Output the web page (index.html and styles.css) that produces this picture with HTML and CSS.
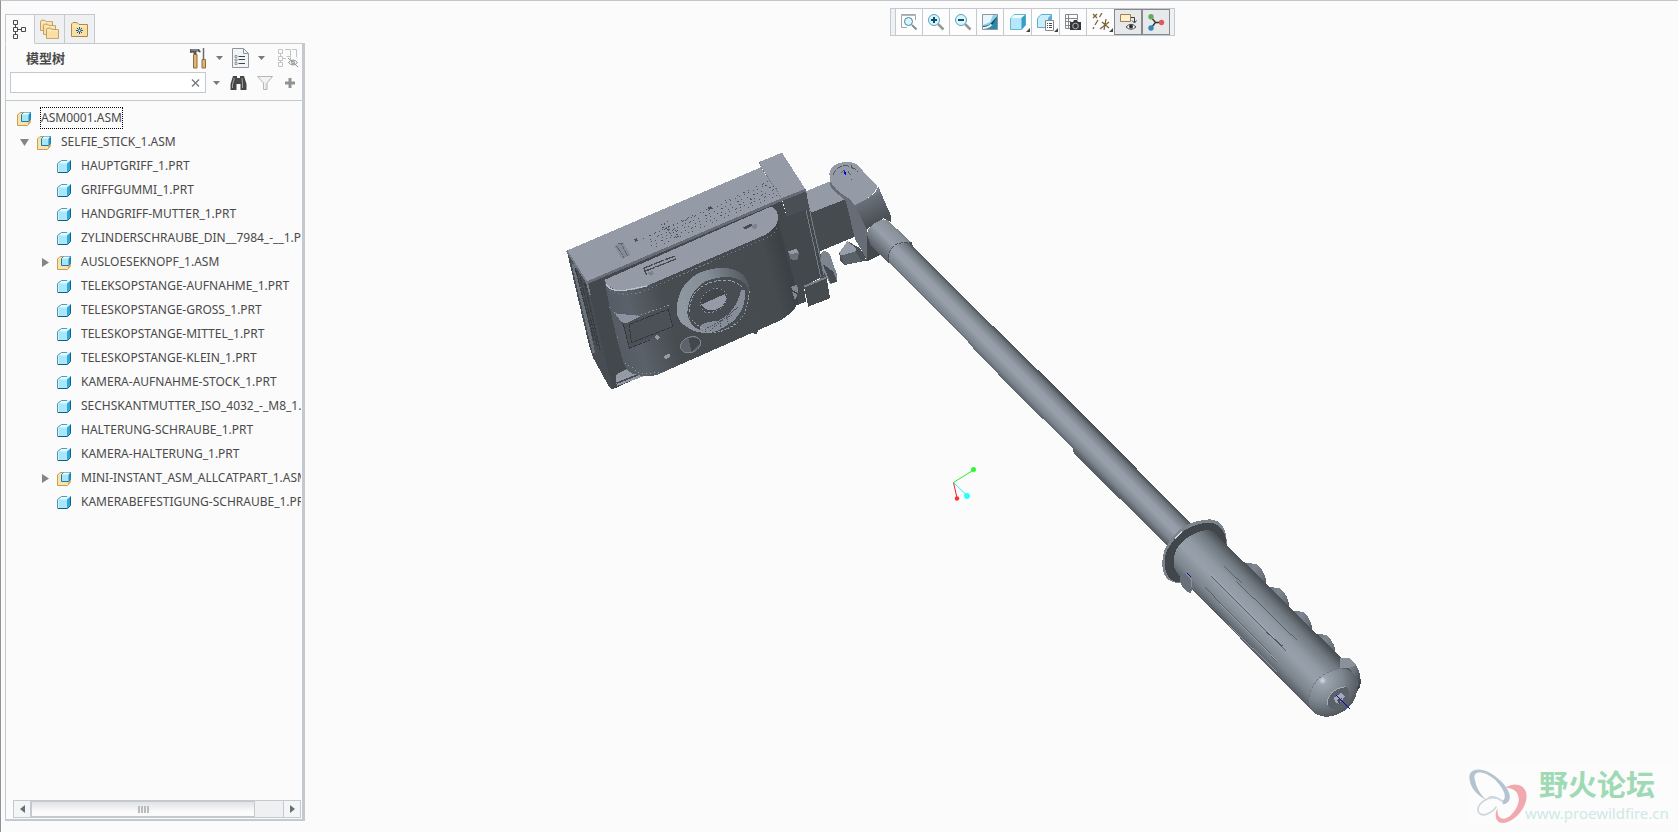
FILE: index.html
```html
<!DOCTYPE html>
<html lang="zh-CN">
<head>
<meta charset="utf-8">
<title>ASM0001.ASM</title>
<link rel="stylesheet" href="styles.css">
</head>
<body>
<svg class="defs" aria-hidden="true">
  <symbol id="part" viewBox="0 0 15 15">
    <path d="M1 4.500L4.500 1.500H13.500V10L10 13.500H1.500V4.500Z" fill="#a8e8fa"/>
    <path d="M1 4.500L4.500 1.500H13.500L10 4.500Z" fill="#e6faff"/>
    <path d="M10 4.500L13.500 1.500V10L10 13.500Z" fill="#2fa9dc"/>
    <path d="M.5 4.500L4.500 1.500H10M.5 4.500V13.500" fill="none" stroke="#4b9bbd"/>
    <path d="M1 13.500H10.500L13.500 10.500V1.500" fill="none" stroke="#15607f"/>
  </symbol>
  <symbol id="asm" viewBox="0 0 15 15">
    <path d="M.5 4L3 1.500H6V10H13V11.500L10.500 14.500H.5Z" fill="#fbe3b0" stroke="#c79f56"/>
    <path d="M11 14L14 11V9H11Z" fill="#d9b063"/>
    <path d="M4.500 3.500L6.500 1.500H13.500V8.500L11.500 10.500H4.500Z" fill="#a5e6fa" stroke="#1e7ba1"/>
    <path d="M11.500 3.500L13.500 1.500V8.500L11.500 10.500Z" fill="#2490bd"/>
    <path d="M5 3.500L7 1.500H13L11.500 3.500Z" fill="#e8fbff"/>
  </symbol>
  <symbol id="folder" viewBox="0 0 17 16">
    <path d="M.5 15V3L2 1.500H6L8 3.500H16.500V15.500H.5Z" fill="#f9dfa5" stroke="#b38a45"/>
    <path d="M1.500 5H15.500" stroke="#fff3d2"/>
  </symbol>
  <symbol id="caret" viewBox="0 0 7 4"><path d="M0 0H7L3.500 4Z" fill="#77797b"/></symbol>
</svg>

<aside class="side">
  <nav class="tabs" aria-label="导航器">
    <button class="tab tab-on" aria-label="模型树"><svg width="14" height="20" viewBox="0 0 14 20" fill="none" stroke="#4a4a4a"><path d="M.5 1.500H4.500V5.500H.5ZM.5 8.500H4.500V12.500H.5ZM.5 15.500H4.500V19.500H.5ZM8.500 8.500H12.500V12.500H8.500ZM2.500 5.500V8.500M2.500 12.500V15.500M4.500 10.500H8.500"/></svg></button>
    <button class="tab" aria-label="文件夹浏览器"><svg width="20" height="20" viewBox="0 0 20 20"><use href="#folder" width="13" height="12"/><use href="#folder" x="3" y="4" width="13" height="12"/><use href="#folder" x="6" y="8" width="13" height="12"/></svg></button>
    <button class="tab" aria-label="收藏夹"><svg width="17" height="16" viewBox="0 0 17 16"><use href="#folder" width="17" height="16"/><path d="M8.500 6V13M5 9.500H12M6 7L11 12M11 7L6 12" stroke="#0f5b80"/><path d="M7.500 8.500H9.500V10.500H7.500Z" fill="#d8f4ff"/></svg></button>
  </nav>

  <section class="panel">
    <header class="head">
      <h1 class="title">模型树</h1>
      <button class="tool" aria-label="设置"><svg width="17" height="21" viewBox="0 0 17 21"><path d="M0 1H9L11 4L9.500 4.500L8 3.500H6.500V6H3.500V4.500L0 5Z" fill="#555"/><path d="M1 2H8" stroke="#aaa"/><path d="M3.500 6.500H7V20H3.500Z" fill="#e0b674" stroke="#8d6c3c"/><path d="M13.500 0V11" stroke="#6b6b6b" stroke-width="1.500"/><path d="M12 11.500H15.500V20H12Z" fill="#e0b674" stroke="#8d6c3c"/></svg></button>
      <button class="tool" aria-label="设置菜单"><svg width="7" height="4"><use href="#caret"/></svg></button>
      <button class="tool" aria-label="显示"><svg width="17" height="20" viewBox="0 0 17 20" fill="none"><path d="M.5 .5H11.500L16.500 5.500V19.500H.5Z" fill="#f2f5f7" stroke="#8b969f"/><path d="M11.500 .5V5.500H16.500" stroke="#8b969f"/><path d="M6.500 8.500H13M6.500 11.500H13M6.500 15.500H13" stroke="#444"/><path d="M3 7.500H5V9.500H3ZM3 11H5V13H3ZM3 14.500H5V16.500H3Z" stroke="#777" stroke-width=".7"/></svg></button>
      <button class="tool" aria-label="显示菜单"><svg width="7" height="4"><use href="#caret"/></svg></button>
      <button class="tool columns" aria-label="隐藏列" disabled><svg width="21" height="20" viewBox="0 0 21 20" fill="none" stroke="#c2c4c6"><path d="M.5 1.500H4.500V5.500H.5ZM.5 8.500H4.500V12.500H.5ZM.5 14.500H4.500V18.500H.5ZM2.500 5.500V8.500M2.500 12.500V14.500M4.500 10.500H8M7 1.500H12.500V8M14 1.500H18.500V9M8.500 8.500H12.500V12.500"/><path d="M10.500 14.500Q15 9.500 19.500 14.500Q15 19.500 10.500 14.500ZM10 10L20 19" stroke="#929496"/><circle cx="15" cy="14.500" r="1.500" stroke="#929496"/></svg></button>
    </header>

    <div class="find">
      <div class="field">
        <input class="query" type="text" aria-label="搜索">
        <button class="clear" aria-label="清除"><svg width="9" height="8" viewBox="0 0 9 8"><path d="M1 .5L8 7.500M8 .5L1 7.500" stroke="#77797b" stroke-width="1.400"/></svg></button>
      </div>
      <button class="tool drop" aria-label="搜索选项"><svg width="7" height="4"><use href="#caret"/></svg></button>
      <button class="tool" aria-label="查找"><svg width="17" height="16" viewBox="0 0 17 16"><path d="M3 1H7V3H10V1H14L16.500 9V15H10.500V9H6.500V15H.5V9Z" fill="#444648"/><path d="M4 3V5L2.500 9V13M12 3L12.500 9V13" stroke="#a0a2a4" fill="none"/></svg></button>
      <button class="tool" aria-label="筛选"><svg width="17" height="16" viewBox="0 0 17 16"><path d="M.5 1.500H15.500L10 8V14.500H6.500V8Z" fill="#f3f3f3" stroke="#b4b6b8"/><path d="M9 8V14" stroke="#c8cacc"/></svg></button>
      <button class="tool" aria-label="添加"><svg width="12" height="12" viewBox="0 0 12 12"><path d="M6 1V11M1 6H11" stroke="#909294" stroke-width="3"/></svg></button>
    </div>

    <ul class="tree">
      <li class="row l0"><svg class="ic"><use href="#asm"/></svg><span class="name focus">ASM0001.ASM</span></li>
      <li class="row l1"><button class="twist" aria-label="折叠"><svg width="9" height="7"><path d="M0 0H9L4.500 7Z" fill="#858585"/></svg></button><svg class="ic"><use href="#asm"/></svg><span class="name">SELFIE_STICK_1.ASM</span></li>
      <li class="row l2"><svg class="ic"><use href="#part"/></svg><span class="name">HAUPTGRIFF_1.PRT</span></li>
      <li class="row l2"><svg class="ic"><use href="#part"/></svg><span class="name">GRIFFGUMMI_1.PRT</span></li>
      <li class="row l2"><svg class="ic"><use href="#part"/></svg><span class="name">HANDGRIFF-MUTTER_1.PRT</span></li>
      <li class="row l2"><svg class="ic"><use href="#part"/></svg><span class="name">ZYLINDERSCHRAUBE_DIN__7984_-__1.PRT</span></li>
      <li class="row l2 sub"><button class="twist" aria-label="展开"><svg width="9" height="9"><path d="M2 0L9 4.500L2 9Z" fill="#858585"/></svg></button><svg class="ic"><use href="#asm"/></svg><span class="name">AUSLOESEKNOPF_1.ASM</span></li>
      <li class="row l2"><svg class="ic"><use href="#part"/></svg><span class="name">TELEKSOPSTANGE-AUFNAHME_1.PRT</span></li>
      <li class="row l2"><svg class="ic"><use href="#part"/></svg><span class="name">TELESKOPSTANGE-GROSS_1.PRT</span></li>
      <li class="row l2"><svg class="ic"><use href="#part"/></svg><span class="name">TELESKOPSTANGE-MITTEL_1.PRT</span></li>
      <li class="row l2"><svg class="ic"><use href="#part"/></svg><span class="name">TELESKOPSTANGE-KLEIN_1.PRT</span></li>
      <li class="row l2"><svg class="ic"><use href="#part"/></svg><span class="name">KAMERA-AUFNAHME-STOCK_1.PRT</span></li>
      <li class="row l2"><svg class="ic"><use href="#part"/></svg><span class="name">SECHSKANTMUTTER_ISO_4032_-_M8_1.PRT</span></li>
      <li class="row l2"><svg class="ic"><use href="#part"/></svg><span class="name">HALTERUNG-SCHRAUBE_1.PRT</span></li>
      <li class="row l2"><svg class="ic"><use href="#part"/></svg><span class="name">KAMERA-HALTERUNG_1.PRT</span></li>
      <li class="row l2 sub"><button class="twist" aria-label="展开"><svg width="9" height="9"><path d="M2 0L9 4.500L2 9Z" fill="#858585"/></svg></button><svg class="ic"><use href="#asm"/></svg><span class="name">MINI-INSTANT_ASM_ALLCATPART_1.ASM</span></li>
      <li class="row l2"><svg class="ic"><use href="#part"/></svg><span class="name">KAMERABEFESTIGUNG-SCHRAUBE_1.PRT</span></li>
    </ul>

    <div class="scroll">
      <button class="arrow" aria-label="向左滚动"><svg width="5" height="8"><path d="M5 0V8L0 4Z" fill="#6c6e70"/></svg></button>
      <div class="track"><div class="thumb"><i class="grip"></i><i class="grip"></i><i class="grip"></i><i class="grip"></i></div></div>
      <button class="arrow" aria-label="向右滚动"><svg width="5" height="8"><path d="M0 0V8L5 4Z" fill="#6c6e70"/></svg></button>
    </div>
  </section>
</aside>

<main class="stage">
  <svg class="model" viewBox="305 1 1373 831" preserveAspectRatio="xMidYMid meet" role="img" aria-label="自拍杆装配模型">
    <defs>
      <linearGradient id="tube" gradientUnits="userSpaceOnUse" x1="0" y1="125" x2="67" y2="58">
        <stop offset="0" stop-color="#596067"/><stop offset=".15" stop-color="#7b838c"/><stop offset=".42" stop-color="#98a1ab"/><stop offset=".6" stop-color="#949da7"/><stop offset=".85" stop-color="#717981"/><stop offset="1" stop-color="#454b50"/>
      </linearGradient>
      <linearGradient id="grip" gradientUnits="userSpaceOnUse" x1="0" y1="112" x2="118" y2="-6">
        <stop offset="0" stop-color="#596067"/><stop offset=".15" stop-color="#7b838c"/><stop offset=".42" stop-color="#98a1ab"/><stop offset=".6" stop-color="#919aa4"/><stop offset=".85" stop-color="#6f777f"/><stop offset="1" stop-color="#4b5156"/>
      </linearGradient>
      <linearGradient id="bump" x1="0" y1="0" x2="1" y2=".6">
        <stop offset="0" stop-color="#5c636a"/><stop offset=".45" stop-color="#7f8891"/><stop offset=".75" stop-color="#68707a"/><stop offset="1" stop-color="#41474c"/>
      </linearGradient>
      <linearGradient id="collar" gradientUnits="userSpaceOnUse" x1="365" y1="315" x2="445" y2="235">
        <stop offset="0" stop-color="#5b6269"/><stop offset=".4" stop-color="#98a1ab"/><stop offset=".7" stop-color="#89929b"/><stop offset="1" stop-color="#4b5156"/>
      </linearGradient>
      <linearGradient id="head" gradientUnits="userSpaceOnUse" x1="350" y1="155" x2="390" y2="240">
        <stop offset="0" stop-color="#858c97"/><stop offset=".25" stop-color="#686f78"/><stop offset="1" stop-color="#4a5055"/>
      </linearGradient>
      <linearGradient id="front" gradientUnits="userSpaceOnUse" x1="170" y1="520" x2="740" y2="360">
        <stop offset="0" stop-color="#555b63"/><stop offset=".12" stop-color="#5b616a"/><stop offset=".3" stop-color="#464c50"/><stop offset=".85" stop-color="#454b4f"/><stop offset=".95" stop-color="#3b4044"/><stop offset="1" stop-color="#4c5257"/>
      </linearGradient>
      <linearGradient id="lens" x1="0" y1=".5" x2="1" y2=".2">
        <stop offset="0" stop-color="#9099a2"/><stop offset=".5" stop-color="#858d96"/><stop offset="1" stop-color="#50575d"/>
      </linearGradient>
      <radialGradient id="cap" cx=".28" cy=".25" r=".85">
        <stop offset="0" stop-color="#d4dde5"/><stop offset=".1" stop-color="#9ca5af"/><stop offset=".5" stop-color="#7d868f"/><stop offset="1" stop-color="#454b50"/>
      </radialGradient>
    </defs>

    <!-- arm and swivel head -->
    <g class="solid" transform="translate(750 140) scale(.3333)">
      <path d="M165 155L245 122L300 180L180 222Z" fill="#949ba7"/>
      <path d="M178 220L286 178L315 290L205 336Z" fill="#454b4f"/>
      <path d="M286 178L310 190L350 268L355 362L316 300Z" fill="#666d76"/>
      <path d="M350 268L365 310L415 370L390 345L352 364L335 335Z" fill="#42484c"/>
      <path d="M268 338L292 303L330 325L350 362L282 375L270 362Z" fill="#4b5156"/>
      <path d="M268 338L292 303L318 325L316 335L272 347Z" fill="#969eaa"/>
      <path d="M272 347L316 335L336 364L284 374Z" fill="#5b6168"/>
      <path d="M238 100Q244 68 290 66Q310 66 320 73L382 138Q385 150 340 185L313 196L300 180Q250 145 240 122Z" fill="#949ba7"/>
      <path d="M240 122Q250 148 300 178L313 196L352 268V362L318 300L296 190L250 150Q238 138 240 122Z" fill="#666d76"/>
      <path d="M313 196L345 180Q386 155 384 138L422 225V245L400 235L350 268Z" fill="url(#head)"/>
      <path d="M250 105Q254 80 290 76L318 88L322 96M272 100Q278 88 292 92L302 104" fill="none" stroke="#555b63" stroke-width="3" stroke-dasharray="18 4"/>
      <path d="M304 75L308 88M302 120H306" stroke="#555b63" stroke-width="3"/>
      <path d="M283 93L287 105" stroke="#0000e8" stroke-width="4"/>
      <path d="M352 285Q350 255 400 238L412 240L485 308L418 370L360 312Z" fill="url(#collar)"/>
    </g>

    <!-- telescopic tube -->
    <g class="solid" transform="translate(880 215) scale(.3333)" fill="url(#tube)">
      <path d="M24 120Q40 80 95 85L98 92L345 340L288 402L38 153L28 145Z"/>
      <path d="M255 370L300 335Q325 325 343 335L475 466L660 650L600 722L382 506L278 398Z"/>
      <path d="M578 700L605 650Q630 634 652 641L772 763L945 938L882 1014L720 852L580 712Z"/>
      <path d="M25 145Q20 75 95 83" fill="none" stroke="#484e53" stroke-width="3" stroke-dasharray="12 3"/>
    </g>

    <!-- handle -->
    <g class="solid" transform="translate(1140 500) scale(.3333)">
      <path d="M80 138Q120 62 210 58Q262 62 260 135L120 250Q65 248 67 185Q68 158 80 138Z" fill="#7b848d"/>
      <path d="M84 145Q130 68 215 68Q258 78 260 138L122 247Q76 248 74 190Q74 165 84 145Z" fill="#41464a"/>
      <path d="M104 118L126 95" stroke="#cdd5dc" stroke-width="4"/>
      <g fill="url(#bump)">
        <path d="M290 186L350 192Q378 215 380 258L390 300Z"/>
        <path d="M370 260L420 264Q446 285 449 328L455 370Z"/>
        <path d="M438 330L492 336Q516 358 519 400L525 440Z"/>
        <path d="M510 402L558 404Q588 428 588 470L595 510Z"/>
        <path d="M575 470L630 475Q668 510 661 560L640 590Z"/>
      </g>
      <path d="M104 205Q88 140 160 103Q215 75 235 110L312 186L600 470L655 540Q648 640 560 650Q530 645 515 630L435 550L165 278Q120 240 104 205Z" fill="url(#grip)"/>
      <path d="M600 475L628 475L650 495Q625 508 600 505Z" fill="#89929b"/>
      <path d="M508 590Q520 525 600 505Q655 505 652 570Q640 640 560 651Q500 645 508 590Z" fill="url(#cap)"/>
      <path d="M508 590Q518 525 600 505" fill="none" stroke="#6d757d" stroke-width="3" stroke-dasharray="8 5"/>
      <path d="M562 615Q560 570 615 560Q635 565 625 600Q605 630 575 628Z" fill="#5a6168"/>
      <path d="M562 615Q560 570 615 560" fill="none" stroke="#a5afb8" stroke-width="3"/>
      <path d="M583 592L605 578L614 590L598 612L584 606Z" fill="#a2abb5"/>
      <path d="M590 600L605 595L598 612Z" fill="#454b50"/>
      <path d="M588 586L630 626" stroke="#0000c8" stroke-width="3"/>
      <path d="M122 228Q132 215 150 230L164 258L150 281L128 262Q118 245 122 228Z" fill="#68717a"/>
      <path d="M140 222L155 240V262" fill="none" stroke="#89929b" stroke-width="4"/>
      <path d="M141 219L153 231" stroke="#0000c8" stroke-width="3"/>
      <path d="M252 198L306 250M288 243L470 420M214 228L437 452M195 262L416 487M194 295L412 520M208 320L430 543" fill="none" stroke="#596067" stroke-width="3"/>
      <path d="M216 226L400 410M240 312L412 484M268 375L410 516" stroke="#a7b0ba" stroke-width="2"/>
      <path d="M378 396L428 438M400 515L430 545M208 320L245 352" stroke="#4b5156" stroke-width="3"/>
    </g>

    <!-- camera -->
    <g class="solid" transform="translate(550 140) scale(.3333)">
      <path d="M765 205L780 205L830 420L812 425Z" fill="#4c5257"/>
      <path d="M813 340Q825 325 840 345L860 400L862 425L840 433L815 380Z" fill="#7d858f"/>
      <path d="M818 372L850 395L862 425L842 430Z" fill="#454b50"/>
      <path d="M50 332L112 430L188 748L178 742L130 655L118 620Z" fill="#474d52"/>
      <path d="M64 370L76 372L136 640L128 640Z" fill="#6b727c"/>
      <path d="M76 385L132 600M90 410L142 618M104 430L150 630" fill="none" stroke="#383d41" stroke-width="4" stroke-dasharray="28 3"/>
      <path d="M112 430L695 178L710 230L778 205L820 408L762 440L768 485L735 498L188 748Z" fill="#42484c"/>
      <path d="M50 332L632 82L697 178L112 430Z" fill="#949ba7"/>
      <path d="M628 66L696 38L768 150L697 178L632 80Z" fill="#949ba7"/>
      <path d="M628 66L632 80L697 178" fill="none" stroke="#6b727c" stroke-width="3" stroke-dasharray="5 4"/>
      <path d="M697 178L768 150L778 205L710 230Z" fill="#494f54"/>
      <path d="M112 428L697 178L768 150" fill="none" stroke="#656c75" stroke-width="8"/>
      <path d="M50 332L112 430L120 465" fill="none" stroke="#737b85" stroke-width="5"/>
      <path d="M768 210L812 410M778 208L822 405" fill="none" stroke="#747b85" stroke-width="3"/>
      <path d="M762 440L830 412L840 475L775 500Z" fill="#454b4f"/>
      <path d="M762 440L830 412" stroke="#7b838d" stroke-width="6"/>
      <path d="M197 705L230 688L290 706L200 738Z" fill="#949ba7"/>
      <path d="M200 730L262 705" stroke="#454b4f" stroke-width="5"/>
      <path d="M163 420L670 200L685 230L732 420L745 480Q742 510 690 542L320 705Q290 715 245 700Q225 690 215 650Q185 540 163 420Z" fill="url(#front)"/>
      <path d="M163 420L662 200Q678 200 685 230Q684 265 645 285L290 438Q260 452 210 452Q175 448 163 420Z" fill="#949ba7"/>
      <path d="M168 434Q185 455 220 452L290 438" fill="none" stroke="#b9c2ce" stroke-width="4"/>
      <path d="M180 450Q225 475 290 450L650 293Q675 285 684 255" fill="none" stroke="#7c848d" stroke-width="3" stroke-dasharray="4 9"/>
      <path d="M176 500L200 525L260 528L360 495M200 590L210 595M225 670L270 702L340 696" fill="none" stroke="#949ba7" stroke-width="3" stroke-dasharray="4 8"/>
      <path d="M190 515L212 535L272 530L350 502L365 540L370 565L238 625L220 560Z" fill="#4b5156"/>
      <path d="M195 520L272 528L228 550L212 545Z" fill="#8b93a0"/>
      <path d="M238 553L355 508L368 560L244 608ZM220 553L238 625L300 600" fill="none" stroke="#30353a" stroke-width="3" stroke-dasharray="14 3"/>
      <!-- lens -->
      <path d="M380 510Q382 435 445 400Q530 365 580 405Q598 425 598 455Q592 560 490 580Q435 582 410 560Q380 545 380 510Z" fill="url(#lens)"/>
      <path d="M412 520Q415 455 465 425Q540 395 585 430Q605 455 592 490Q575 560 490 578Q420 575 412 520Z" fill="#474d52"/>
      <path d="M455 573Q430 550 505 542Q560 515 573 450L585 450Q592 540 490 577Z" fill="#858d98"/>
      <path d="M465 568L545 525M480 572L565 500M510 548L515 568M530 535L538 558" stroke="#4c5258" stroke-width="3" stroke-dasharray="5 3"/>
      <path d="M418 515Q420 455 470 432Q535 405 576 440" fill="none" stroke="#9ba3ad" stroke-width="3" stroke-dasharray="9 5"/>
      <path d="M400 480Q410 555 490 578Q595 565 598 450" fill="none" stroke="#9ba3ad" stroke-width="3" stroke-dasharray="5 6"/>
      <path d="M450 490Q460 445 510 445Q540 458 525 490Q500 525 460 515Z" fill="#41474b" stroke="#8f98a3" stroke-width="3" stroke-dasharray="4 8"/>
      <path d="M453 494L525 462Q535 480 515 500Q475 525 453 494Z" fill="#949ba7"/>
      <ellipse cx="422" cy="614" rx="32" ry="23" transform="rotate(-24 422 614)" fill="#5c636b" stroke="#9099a4" stroke-width="2"/>
      <path d="M415 595Q445 585 452 610L425 636Z" fill="#41474b"/>
      <path d="M314 590L322 583L330 592L322 600ZM342 648L358 640L360 652L345 658Z" fill="#949ba7"/>
      <!-- top details -->
      <path d="M192 318L218 306L242 345L216 357Z" fill="#858c97"/>
      <path d="M200 318L222 353M213 308L232 347M205 309L220 312" stroke="#5b6169" stroke-width="3" stroke-dasharray="9 3"/>
      <path d="M280 385L374 348M284 394L378 357M283 388L290 405" fill="none" stroke="#454b4f" stroke-width="4" stroke-dasharray="32 3"/>
      <path d="M292 396L308 394L312 402L300 408Z" fill="#7b838e"/>
      <path d="M580 262L606 250L606 258L585 268Z" fill="#454b4f"/>
      <path d="M604 255L622 252L622 264L610 268Z" fill="#7b838e"/>
      <path d="M255 302L262 298M475 207L484 202" stroke="#454b4f" stroke-width="8"/>
      <g fill="none" stroke="#4d5359" stroke-width="3">
        <path d="M280 295L660 122" stroke-dasharray="3 17 5 11 3 23"/>
        <path d="M300 286L662 130" stroke-dasharray="4 13 3 9"/>
        <path d="M300 298L672 138" stroke-dasharray="3 21 6 7 3 12"/>
        <path d="M302 307L680 146" stroke-dasharray="5 9 3 19"/>
        <path d="M304 316L684 154" stroke-dasharray="3 11 3 16 6 9"/>
        <path d="M318 320L688 163" stroke-dasharray="4 22 3 10"/>
        <path d="M332 256L358 242M336 262L382 274M342 252L368 290M400 240L412 256M372 292L388 288M590 172L606 178" stroke-dasharray="5 5"/>
      </g>
      <!-- side latches -->
      <path d="M714 334L740 326L747 340L742 360L722 358Z" fill="#6a717b"/>
      <path d="M714 334L740 326L745 337L722 344Z" fill="#949ba7"/>
      <path d="M724 440L742 434L744 458L735 482L728 460Z" fill="#7f8792"/>
      <path d="M724 452L744 462" stroke="#383d41" stroke-width="4"/>
      <path d="M605 578L625 572L620 583Z" fill="#42484c"/>
    </g>

    <!-- spin centre -->
    <g stroke-width="1" fill="none">
      <path d="M953.500 482.500L973.500 470" stroke="#20f020"/><circle cx="973.500" cy="469.500" r="2.500" fill="#30f830"/>
      <path d="M953.500 482.500L957 498" stroke="#f02020"/><circle cx="957" cy="498.500" r="2.200" fill="#ff3030"/>
      <path d="M953.500 482.500L967 495.500" stroke="#20f0f8"/><circle cx="967" cy="496" r="3" fill="#30ffff"/>
    </g>
  </svg>

  <div class="bar" role="toolbar" aria-label="视图工具">
    <button class="cmd" aria-label="重新调整"><svg width="18" height="18" viewBox="0 0 18 18" fill="none"><path d="M1.500 14.500V1.500H15.500V7M1.500 14.500H7" stroke="#a4a7a9"/><path d="M1 2.500H16" stroke="#b4b7b9"/><circle cx="8.500" cy="8.500" r="4" fill="#daf4fc" stroke="#3a88aa"/><path d="M12 12L16.500 16.500" stroke="#8b8e90" stroke-width="2"/></svg></button>
    <button class="cmd" aria-label="放大"><svg width="18" height="18" viewBox="0 0 18 18" fill="none"><circle cx="7" cy="7" r="5.500" fill="#daf4fc" stroke="#5ba3c0"/><path d="M4 7H10M7 4V10" stroke="#0f4e6c" stroke-width="2"/><path d="M11 11L16.500 16.500" stroke="#95989a" stroke-width="2.500"/></svg></button>
    <button class="cmd" aria-label="缩小"><svg width="18" height="18" viewBox="0 0 18 18" fill="none"><circle cx="7" cy="7" r="5.500" fill="#daf4fc" stroke="#5ba3c0"/><path d="M4 7H10" stroke="#0f4e6c" stroke-width="2"/><path d="M11 11L16.500 16.500" stroke="#95989a" stroke-width="2.500"/></svg></button>
    <button class="cmd" aria-label="重画"><svg width="18" height="18" viewBox="0 0 18 18"><path d="M1.500 1.500H16.500V16.500H1.500Z" fill="#8ed0e8" stroke="#8b979e"/><path d="M2 2H12L9 9L2 12Z" fill="#e6f7fc"/><path d="M16 4V16H4Q11 15 12 9Z" fill="#2b89ae"/><path d="M2 13Q8 13 10 10L16.500 3L12 11Q8 16 2 16Z" fill="#12516e"/><path d="M2 14Q7 14 9.500 11L11.500 12Q7 16 2 16Z" fill="#f7fbfc"/></svg></button>
    <button class="cmd more" aria-label="显示样式"><svg width="18" height="18" viewBox="0 0 18 18"><path d="M1.500 5.500L5 1.500H16.500V12L12.500 16.500H1.500Z" fill="#b4e8fa" stroke="#6ab6d0"/><path d="M2 5L5 2H16L12 5Z" fill="#ebfbff"/><path d="M12.500 5L16.500 1.500V12L12.500 16.500Z" fill="#3a9cc1"/></svg></button>
    <button class="cmd more" aria-label="已保存方向"><svg width="18" height="18" viewBox="0 0 18 18"><path d="M.5 5.500L4 1.500H14.500V11L11.500 14.500H.5Z" fill="#c9effb" stroke="#5fafca"/><path d="M11 5L14.500 1.500V11L11 14.500Z" fill="#5ab0ce"/><path d="M8.500 7.500H16.500V17.500H8.500Z" fill="#fff" stroke="#85888b"/><path d="M10 10.500H11M12 10.500H15M10 12.500H11M12 12.500H15M10 14.500H11M12 14.500H15" stroke="#4b4e50"/></svg></button>
    <button class="cmd" aria-label="视图管理器"><svg width="18" height="18" viewBox="0 0 18 18" fill="none"><path d="M1.500 1.500H13.500V7M1.500 1.500V15.500H6M1.500 5.500H13.500M1.500 8.500H7M1.500 12.500H6M4.500 1.500V15.500" stroke="#85888b"/><path d="M6 9H9L10 7H13L14 9H17V17H6Z" fill="#35383a"/><circle cx="11.500" cy="13" r="2.800" stroke="#b3b6b8"/></svg></button>
    <button class="cmd more" aria-label="基准显示"><svg width="18" height="18" viewBox="0 0 18 18" fill="none" stroke="#7d6538" stroke-width="1.300"><path d="M1 1L5 5M5 1L1 5M10 0L7.500 4M6 7L3 12M14 6L12 17M10 9L17 15M17 9L8 16M2 14L1 16"/></svg></button>
    <button class="cmd on" aria-label="注释显示"><svg width="18" height="18" viewBox="0 0 18 18" fill="none"><path d="M1.500 1.500H11.500V8.500H1.500Z" fill="#fdf0cb" stroke="#9c8250"/><path d="M12 4.500H15.500V9M13 7.500L15.500 10L17.500 7.500" stroke="#37393b"/><path d="M7 14Q12 8.500 17 14Q12 18.500 7 14Z" fill="#f4f4f4" stroke="#4a4c4e"/><circle cx="12" cy="13.500" r="2" fill="#2d2f31"/></svg></button>
    <button class="cmd on" aria-label="旋转中心"><svg width="18" height="18" viewBox="0 0 18 18"><path d="M4 4L8.500 9.500M4 15L8.500 9.500L14 9.500" fill="none" stroke="#2f3133" stroke-width="1.300"/><circle cx="4" cy="3.800" r="2.700" fill="#5fae5c"/><circle cx="4" cy="15" r="2.700" fill="#3486b6"/><circle cx="14.500" cy="9.500" r="2.700" fill="#db5d5d"/></svg></button>
  </div>

  <div class="mark">
    <svg class="logo" width="62" height="60" viewBox="0 0 186 180" fill="none" aria-hidden="true">
      <path fill-rule="evenodd" fill="#b3c3d0" d="M8 45C0 5 50 3 90 38C135 75 140 112 108 118L106 108C122 100 112 72 85 45C50 14 14 16 24 45C28 70 42 90 58 105C30 90 12 70 8 45Z"/>
      <path fill-rule="evenodd" fill="#f0aaae" d="M115 68C155 42 195 70 172 122C152 165 100 190 88 162C84 150 86 138 92 130C88 160 108 172 132 150C168 115 162 68 115 68Z"/>
      <path d="M88 100C60 92 25 120 35 142C45 158 75 145 88 125M65 98C80 90 95 100 108 110" stroke="#cbd6de" stroke-width="5"/>
    </svg>
    <div class="words"><span class="forum">野火论坛</span><a class="url" href="#">www.proewildfire.cn</a></div>
  </div>
</main>
</body>
</html>
```
FILE: styles.css
```css
* { box-sizing: border-box; }
html, body { height: 100%; }
body {
  margin: 0;
  display: flex;
  background: #fbfbfb;
  border-top: 1px solid #c3c7cb;
  border-left: 1px solid #909294;
  color: #4a4a4a;
  font-family: "Noto Sans", "Noto Sans CJK SC", sans-serif;
  font-size: 12px;
  overflow: hidden;
}
button { font: inherit; color: inherit; padding: 0; border: 0; background: none; }
svg { display: block; flex: none; }
.defs { position: absolute; width: 0; height: 0; }

.side { flex: none; width: 304px; padding: 13px 0 11px 4px; display: flex; flex-direction: column; }
.tabs { display: flex; }
.tab {
  width: 30px; height: 30px;
  display: flex; align-items: center; justify-content: center;
  background: #eef0f2;
  border: 1px solid #c3c9ce; border-left-width: 0;
}
.tab-on { position: relative; background: #fbfbfb; border-left-width: 1px; border-bottom-color: #fbfbfb; }
.panel {
  flex: 1; min-height: 0;
  display: flex; flex-direction: column;
  margin-top: -1px;
  border: 1px solid #c3c9ce; border-right-width: 3px; border-bottom-width: 2px;
}
.head { display: flex; align-items: center; gap: 9px; height: 28px; padding: 0 3px 0 20px; }
.title { flex: 1; margin: 0; font-size: 13px; line-height: 20px; font-weight: 700; }
.tool { flex: none; display: flex; align-items: center; justify-content: center; }
.columns { margin-left: 4px; }
.find { display: flex; align-items: center; gap: 10px; height: 29px; padding: 0 6px 7px 4px; border-bottom: 1px solid #c3c9ce; }
.field { flex: 1; min-width: 0; display: flex; align-items: center; height: 21px; padding-right: 5px; background: #fff; border: 1px solid #c3c9ce; }
.query { flex: 1; min-width: 0; height: 18px; padding: 0 4px; border: 0; outline: 0; background: none; font: inherit; }
.find .drop { margin-left: -3px; }

.tree { flex: 1; min-height: 0; margin: 0; padding: 5px 1px 0 0; list-style: none; overflow: hidden; }
.row { display: flex; align-items: center; height: 24px; line-height: 20px; overflow: hidden; white-space: nowrap; }
.l0 { padding-left: 11px; }
.l1 { padding-left: 14px; }
.l2 { padding-left: 51px; }
.sub { padding-left: 34px; }
.twist { width: 17px; height: 16px; flex: none; display: flex; align-items: center; }
.ic { width: 15px; height: 15px; margin-right: 8px; }
.name { border: 1px solid transparent; height: 22px; }
.focus { border: 1px dotted #000; }

.scroll { display: flex; height: 18px; margin: 0 1px 1px 7px; border: 1px solid #c3c9ce; background: #eef0f2; }
.arrow { width: 16px; display: flex; align-items: center; justify-content: center; background: #f4f5f6; }
.track { flex: 1; border: solid #c3c9ce; border-width: 0 1px; }
.thumb {
  width: 89%; height: 16px;
  display: flex; align-items: center; justify-content: center; gap: 1px;
  background: linear-gradient(#e2e2e2, #fbfbfb 70%);
  border: 1px solid #fff; outline: 1px solid #c3c9ce; outline-offset: -1px;
}
.grip { width: 2px; height: 7px; background: #b9bbbd; }

.stage { flex: 1; min-width: 0; position: relative; display: flex; flex-direction: column; align-items: center; padding: 7px 0 0 82px; }
.model { position: absolute; inset: 0; width: 100%; height: 100%; }
.solid { shape-rendering: crispEdges; }
.bar { position: relative; display: flex; height: 28px; padding: 0 4px; background: #eef0f2; border: 1px solid #c3c9ce; }
.cmd {
  width: 27px; position: relative;
  display: flex; align-items: center; justify-content: center;
  background: #fdfdfd; border-left: 1px solid #c3c9ce;
}
.cmd:last-child { border-right: 1px solid #c3c9ce; }
.more { width: 28px; }
.more::after { content: ""; position: absolute; right: 1px; bottom: 3px; border: 2px solid; border-color: transparent #444 #444 transparent; }
.on, .on:last-child { width: 28px; background: #e6e8ea; border: 1px solid #85898c; }

.mark { position: absolute; right: 6px; bottom: 7px; display: flex; align-items: flex-start; width: 205px; height: 60px; background: #fcfcfc; }
.words { display: flex; flex-direction: column; align-items: center; margin-left: -4px; }
.forum { font: 700 29px/36px "Noto Sans CJK SC", sans-serif; color: #9fdab5; }
.url { font: 15px/24px "Noto Sans", sans-serif; color: #cfe8e6; text-decoration: none; }
```
